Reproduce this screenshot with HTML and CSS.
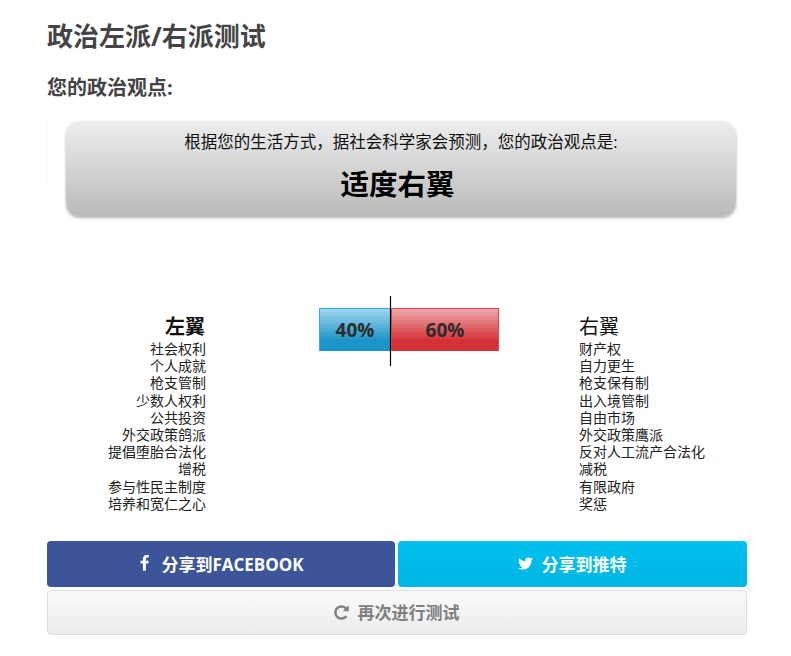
FILE: index.html
```html
<!DOCTYPE html>
<html lang="zh-CN">
<head>
  <meta charset="UTF-8" />
  <title>政治左派/右派测试</title>
  <link rel="stylesheet" href="styles.css">
</head>
<body>
  <div class="main">
    <h1>政治左派/右派测试</h1>
    <h2>您的政治观点:</h2>

    <div class="result-row">
      <div class="faint-line"></div>
      <div class="result-box">
        <p class="result-intro">根据您的生活方式&#65292;据社会科学家会预测&#65292;您的政治观点是:</p>
        <p class="result-value">适度右翼</p>
      </div>
    </div>

    <div class="scale">
      <div class="side side-left">
        <h3>左翼</h3>
        <ul>
          <li>社会权利</li>
          <li>个人成就</li>
          <li>枪支管制</li>
          <li>少数人权利</li>
          <li>公共投资</li>
          <li>外交政策鸽派</li>
          <li>提倡堕胎合法化</li>
          <li>增税</li>
          <li>参与性民主制度</li>
          <li>培养和宽仁之心</li>
        </ul>
      </div>

      <div class="meter">
        <div class="bar bar-left" style="width: 40%">40%</div>
        <div class="bar bar-right" style="width: 60%">60%</div>
        <div class="marker"></div>
      </div>

      <div class="side side-right">
        <h3>右翼</h3>
        <ul>
          <li>财产权</li>
          <li>自力更生</li>
          <li>枪支保有制</li>
          <li>出入境管制</li>
          <li>自由市场</li>
          <li>外交政策鹰派</li>
          <li>反对人工流产合法化</li>
          <li>减税</li>
          <li>有限政府</li>
          <li>奖惩</li>
        </ul>
      </div>
    </div>

    <div class="share-row">
      <a class="btn btn-facebook">
        <svg class="icon" viewBox="0 0 1792 1792"><path d="M1343 12v264h-157q-86 0-116 36t-30 108v189h293l-39 296h-254v759h-306v-759h-255v-296h255v-218q0-186 104-288.5t277-102.5q147 0 228 12z"/></svg>
        分享到FACEBOOK
      </a>
      <a class="btn btn-twitter">
        <svg class="icon" viewBox="0 0 1792 1792"><path d="M1684 408q-67 98-162 167 1 14 1 42 0 130-38 259.5t-115.5 248.5-184.5 210.5-258 146-323 54.5q-271 0-496-145 35 4 75 4 225 0 401-138-105-2-188-64.5t-114-159.5q33 5 61 5 43 0 85-11-112-23-185.5-111.5t-73.5-205.5v-4q68 38 146 41-66-44-105-115t-39-154q0-88 44-163 121 149 294.5 238.5t371.5 99.5q-8-38-8-74 0-134 94.5-228.5t228.5-94.5q140 0 236 102 109-21 205-78-37 115-142 178 92-10 184-50z"/></svg>
        分享到推特
      </a>
    </div>
    <a class="btn btn-retry">
      <svg class="icon" viewBox="0 0 1792 1792"><path d="M1664 256v448q0 26-19 45t-45 19h-448q-42 0-59-40-17-39 14-69l138-138q-148-137-349-137-104 0-198.5 40.5t-163.5 109.5-109.5 163.5-40.5 198.5 40.5 198.5 109.5 163.5 163.5 109.5 198.5 40.5q119 0 225-52t179-147q7-10 23-12 15 0 25 9l137 138q9 8 9.5 20.5t-7.5 22.5q-109 132-264 204.5t-327 72.5q-156 0-298-61t-245-164-164-245-61-298 61-298 164-245 245-164 298-61q147 0 284.5 55.5t244.5 156.5l130-129q29-31 70-14 39 17 39 59z"/></svg>
      再次进行测试
    </a>
  </div>
</body>
</html>
```

FILE: styles.css
```css
body {
  font-family: "Open Sans", "Noto Sans CJK SC", sans-serif;
  margin: 0;
  padding: 0;
  background-color: #fff;
  color: #444;
}

.main {
  width: 700px;
  margin-left: 47px;
}

h1 {
  font-size: 26px;
  line-height: 36px;
  font-weight: bold;
  margin: 0;
  padding-top: 18px;
}

h2 {
  font-size: 20px;
  line-height: 28px;
  font-weight: bold;
  margin: 20px 0 0;
}

.result-row {
  display: flex;
  margin-top: 19px;
}

.faint-line {
  width: 1px;
  height: 65px;
  background-color: #f6f6f6;
}

.result-box {
  width: 670px;
  height: 95px;
  margin-left: 18px;
  border-radius: 14px;
  background: linear-gradient(to bottom, #eeeeee, #bababa);
  box-shadow: 0 2px 3px rgba(0, 0, 0, 0.3);
  text-align: center;
  color: #111;
}

.result-intro {
  font-size: 16.5px;
  line-height: 22px;
  margin: 0;
  padding-top: 10px;
}

.result-value {
  font-size: 28.5px;
  line-height: 40px;
  font-weight: bold;
  color: #000;
  margin: 11px 0 0;
  padding-right: 7px;
}

.scale {
  display: flex;
  align-items: flex-start;
  margin-top: 80px;
}

.side {
  color: #222;
  font-size: 14px;
  line-height: 17.2px;
  padding-top: 18px;
}

.side h3 {
  font-size: 20px;
  line-height: 26px;
  margin: 0;
  color: #111;
}

.side ul {
  list-style: none;
  margin: 0;
  padding: 0;
}

.side-left {
  width: 159px;
  text-align: right;
}

.side-left h3 {
  padding-right: 1px;
}

.side-right {
  margin-left: 80px;
}

.side-right h3 {
  font-weight: normal;
}

.meter {
  position: relative;
  display: flex;
  width: 180px;
  height: 43px;
  margin: 12px 0 0 113px;
}

.bar {
  box-sizing: border-box;
  font-size: 19px;
  font-weight: bold;
  line-height: 43px;
  text-align: center;
  color: #2b2b2b;
}

.bar-left {
  background: linear-gradient(to bottom, #a2d6f0, #1b94c8 75%);
  border: 1px solid #3aa8d8;
  border-bottom: none;
}

.bar-right {
  background: linear-gradient(to bottom, #eca9ac, #d43136 75%);
  border: 1px solid #e2484d;
  border-bottom: none;
}

.marker {
  position: absolute;
  left: 71px;
  top: -12px;
  width: 1px;
  height: 70px;
  background-color: #000;
  box-shadow: 0 0 1px rgba(0, 0, 0, 0.9);
}

.share-row {
  display: flex;
  gap: 3px;
  margin-top: 29px;
}

.btn {
  display: flex;
  align-items: center;
  justify-content: center;
  box-sizing: border-box;
  font-size: 17px;
  font-weight: bold;
  border-radius: 4px;
  padding: 0 2px 2px 0;
  cursor: pointer;
}

.icon {
  width: 17px;
  height: 17px;
  margin-right: 8px;
  margin-top: 1px;
  fill: currentColor;
}

.btn-facebook {
  width: 348px;
  height: 46px;
  color: #fff;
  background-color: #3b5598;
}

.btn-twitter {
  width: 349px;
  height: 46px;
  color: #fff;
  background: linear-gradient(to bottom, #00c0ee, #00b5e4);
}

.btn-retry {
  height: 45px;
  margin-top: 3px;
  color: #808080;
  background: linear-gradient(to bottom, #fafafa, #ececec);
  border: 1px solid #dedede;
}
```
